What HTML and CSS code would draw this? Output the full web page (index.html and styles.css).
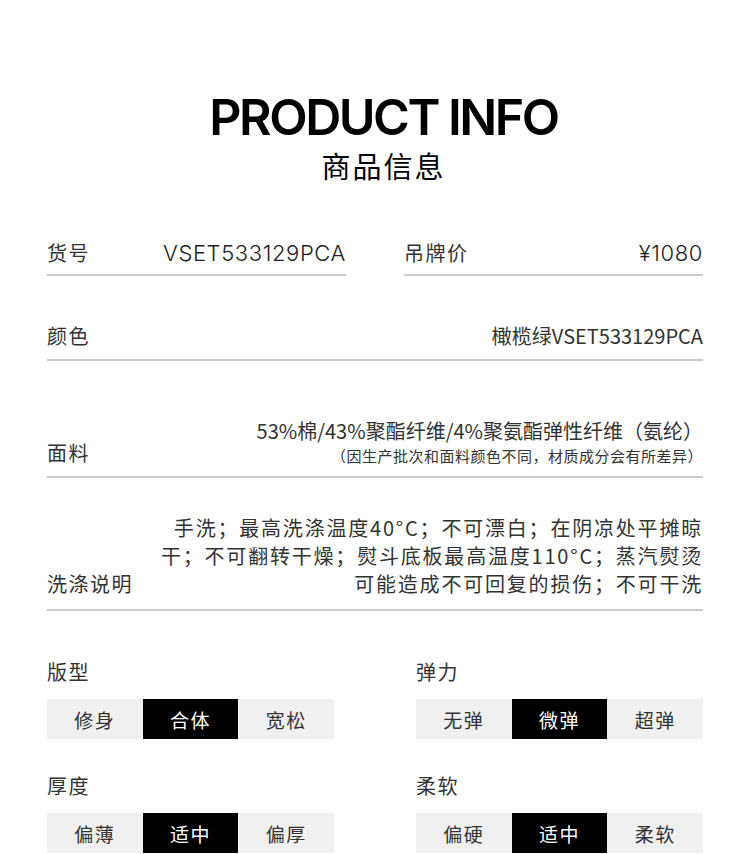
FILE: index.html
```html
<!DOCTYPE html>
<html lang="zh-CN">
<head>
  <meta charset="UTF-8">
  <title>商品信息</title>
  <link rel="stylesheet" href="styles.css">
</head>
<body>
  <div class="page">
    <div class="header">
      <h1>PRODUCT INFO</h1>
      <h2>商品信息</h2>
    </div>

    <!-- basic info rows -->
    <div class="info-pair">
      <div class="info-row">
        <span class="label">货号</span>
        <span class="value latin">VSET533129PCA</span>
      </div>
      <div class="info-row">
        <span class="label">吊牌价</span>
        <span class="value latin">¥1080</span>
      </div>
    </div>

    <div class="info-row row-color">
      <span class="label">颜色</span>
      <span class="value">橄榄绿VSET533129PCA</span>
    </div>

    <div class="info-row row-fabric">
      <span class="label">面料</span>
      <div class="value">
        <div>53%棉/43%聚酯纤维/4%聚氨酯弹性纤维（氨纶）</div>
        <div class="note">（因生产批次和面料颜色不同，材质成分会有所差异）</div>
      </div>
    </div>

    <div class="info-row row-wash">
      <span class="label">洗涤说明</span>
      <div class="value">
        手洗；最高洗涤温度40°C；不可漂白；在阴凉处平摊晾<br>
        干；不可翻转干燥；熨斗底板最高温度110°C；蒸汽熨烫<br>
        可能造成不可回复的损伤；不可干洗
      </div>
    </div>

    <!-- fit / feel options -->
    <div class="spec-grid">
      <div class="spec">
        <div class="spec-title">版型</div>
        <div class="segments">
          <span class="seg">修身</span>
          <span class="seg active">合体</span>
          <span class="seg">宽松</span>
        </div>
      </div>
      <div class="spec">
        <div class="spec-title">弹力</div>
        <div class="segments">
          <span class="seg">无弹</span>
          <span class="seg active">微弹</span>
          <span class="seg">超弹</span>
        </div>
      </div>
      <div class="spec">
        <div class="spec-title">厚度</div>
        <div class="segments">
          <span class="seg">偏薄</span>
          <span class="seg active">适中</span>
          <span class="seg">偏厚</span>
        </div>
      </div>
      <div class="spec">
        <div class="spec-title">柔软</div>
        <div class="segments">
          <span class="seg">偏硬</span>
          <span class="seg active">适中</span>
          <span class="seg">柔软</span>
        </div>
      </div>
    </div>
  </div>
</body>
</html>
```

FILE: styles.css
```css
/* Product info sheet */
body {
  margin: 0;
  background-color: #fff;
  color: #333;
  font-family: "Noto Sans CJK SC", sans-serif;
  font-size: 20px;
  letter-spacing: 1.5px;
}

.page {
  width: 656px;
  margin: 0 0 0 47px;
  overflow: hidden;
  height: 854px;
}

.header {
  text-align: center;
  padding-top: 89px;
  padding-left: 17px;
  color: #000;
}

.header h1 {
  margin: 0;
  font-family: Inter, sans-serif;
  font-weight: 600;
  font-size: 50px;
  line-height: 56px;
  letter-spacing: -2.5px;
}

.header h2 {
  margin: 0;
  font-weight: 400;
  font-size: 29px;
  line-height: 40px;
  letter-spacing: 2px;
}

.info-pair {
  display: flex;
  justify-content: space-between;
  margin-top: 54px;
}

.info-pair .info-row {
  width: 299px;
}

.info-row {
  display: flex;
  justify-content: space-between;
  align-items: flex-end;
  line-height: 28px;
  padding-bottom: 7px;
  border-bottom: 2px solid #cbcbcb;
}

.label {
  white-space: nowrap;
}

.value {
  text-align: right;
}

.latin {
  font-family: Inter, sans-serif;
  font-weight: 300;
  font-size: 22px;
  letter-spacing: 0.6px;
  color: #222;
}

.row-color {
  margin-top: 46px;
  padding-bottom: 9px;
}

.row-color .value {
  letter-spacing: 0;
}

.row-fabric {
  margin-top: 56px;
  padding-bottom: 9px;
}

.row-fabric .value {
  letter-spacing: 0;
}

.row-fabric .note {
  font-size: 15px;
  line-height: 22px;
  letter-spacing: 0.5px;
}

.row-wash {
  margin-top: 36px;
  padding-bottom: 11px;
}

.row-wash .value {
  letter-spacing: 1.8px;
}

.spec-grid {
  display: grid;
  grid-template-columns: 287px 287px;
  justify-content: space-between;
  row-gap: 33px;
  margin-top: 47px;
}

.spec-title {
  line-height: 28px;
  margin-bottom: 13px;
}

.segments {
  display: flex;
  height: 40px;
  background-color: #f0f0f0;
}

.seg {
  flex: 1;
  display: flex;
  align-items: center;
  justify-content: center;
  font-size: 19px;
}

.seg.active {
  background-color: #000;
  color: #fff;
}
```
